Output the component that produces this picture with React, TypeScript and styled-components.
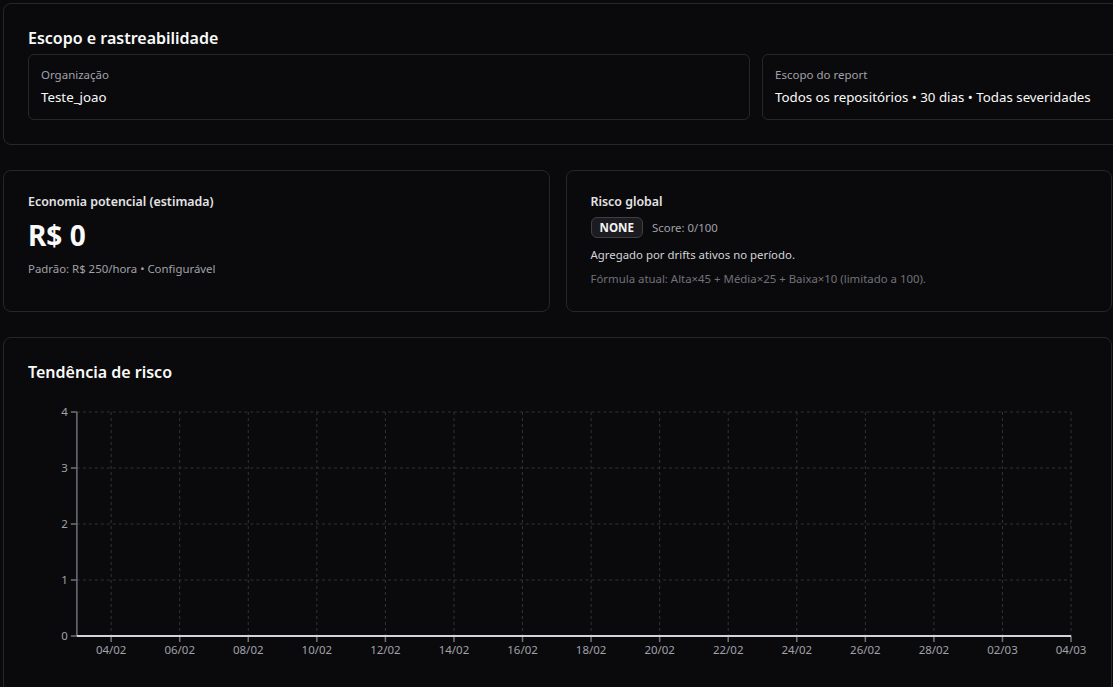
import React from "react";
import styled, { createGlobalStyle } from "styled-components";

const GlobalStyle = createGlobalStyle`
  html, body {
    margin: 0;
    padding: 0;
    background: #0a0a0c;
    overflow: hidden;
  }
  body {
    font-family: "Segoe UI", "Noto Sans", "Open Sans", sans-serif;
    color: #fafafa;
  }
  * { box-sizing: border-box; }
`;

const Page = styled.div`
  padding: 3px 1px 0 3px;
  display: flex;
  flex-direction: column;
  gap: 25px;
`;

const Card = styled.section<{ $wide?: boolean }>`
  border: 1px solid #27272a;
  border-radius: 8px;
  background: #0a0a0c;
  padding: 24px;
  width: ${(p) => (p.$wide ? "1145px" : "auto")};
`;

const CardTitle = styled.h2`
  margin: 0;
  font-size: 16px;
  line-height: 20px;
  font-weight: 600;
  color: #fafafa;
`;

const ScopeGrid = styled.div`
  margin-top: 6px;
  display: grid;
  grid-template-columns: 2fr 1fr;
  gap: 12px;
`;

const ScopeBox = styled.div`
  border: 1px solid #27272a;
  border-radius: 6px;
  padding: 12px;
`;

const ScopeLabel = styled.div`
  font-size: 11.5px;
  line-height: 16px;
  color: #a1a1aa;
`;

const ScopeValue = styled.div`
  margin-top: 4px;
  font-size: 13.3px;
  line-height: 20px;
  color: #fafafa;
  white-space: nowrap;
`;

const Row = styled.div`
  display: grid;
  grid-template-columns: 1fr 1fr;
  gap: 16px;
`;

const SmallTitle = styled.h3`
  margin: 0;
  font-size: 12.4px;
  line-height: 14px;
  font-weight: 600;
  color: #e4e4e7;
`;

const BigValue = styled.div`
  margin-top: 8px;
  font-size: 28px;
  line-height: 36px;
  font-weight: 700;
  color: #fafafa;
`;

const Muted = styled.p<{ $tone?: "soft" | "dim"; $gap?: number }>`
  margin: ${(p) => p.$gap ?? 8}px 0 0;
  font-size: 11.4px;
  line-height: 16px;
  color: ${(p) => (p.$tone === "soft" ? "#d4d4d8" : p.$tone === "dim" ? "#71717a" : "#a1a1aa")};
`;

const BadgeRow = styled.div`
  margin-top: 8px;
  display: flex;
  align-items: center;
  gap: 9px;
`;

const Badge = styled.span`
  display: inline-flex;
  align-items: center;
  height: 21px;
  padding: 0 8px;
  border: 1px solid #3f3f46;
  border-radius: 6px;
  background: #1c1c20;
  font-size: 11.6px;
  font-weight: 700;
  color: #f4f4f5;
`;

const ScoreText = styled.span`
  font-size: 11.4px;
  color: #a1a1aa;
`;

const ChartWrap = styled.div`
  margin-top: 14px;
`;

const days = 29;
const x0 = 49;
const x1 = 1046;
const yTop = 16;
const yBot = 240;
const fmt = (d: number) => {
  const date = new Date(2026, 1, 3 + d);
  const dd = String(date.getDate()).padStart(2, "0");
  const mm = String(date.getMonth() + 1).padStart(2, "0");
  return `${dd}/${mm}`;
};

function RiskChart() {
  const dx = (x1 - x0) / days;
  const xTicks = Array.from({ length: 15 }, (_, i) => 1 + i * 2);
  const yTicks = [0, 1, 2, 3, 4];
  const yOf = (v: number) => yBot - (v / 4) * (yBot - yTop);
  return (
    <svg width="100%" height="272" viewBox="0 0 1062 272" preserveAspectRatio="none">
      <g stroke="#333338" strokeDasharray="3 3" strokeWidth="1">
        {yTicks.slice(1).map((v) => (
          <line key={v} x1={x0} x2={x1} y1={yOf(v)} y2={yOf(v)} />
        ))}
        {xTicks.map((d) => (
          <line key={d} x1={x0 + d * dx} x2={x0 + d * dx} y1={yTop} y2={yBot} />
        ))}
      </g>
      <g stroke="#71717a" strokeWidth="1.5">
        <line x1={x0} x2={x0} y1={yTop} y2={yBot} />
        {yTicks.map((v) => (
          <line key={v} x1={x0 - 6} x2={x0} y1={yOf(v)} y2={yOf(v)} />
        ))}
        {xTicks.map((d) => (
          <line key={d} x1={x0 + d * dx} x2={x0 + d * dx} y1={yBot} y2={yBot + 6} />
        ))}
      </g>
      <line x1={x0} x2={x1} y1={yBot} y2={yBot} stroke="#d4d4d8" strokeWidth="2" />
      <g fill="#a1a1aa" fontSize="11.5" fontFamily="'Segoe UI', 'Noto Sans', sans-serif">
        {yTicks.map((v) => (
          <text key={v} x={x0 - 9} y={yOf(v) + 4} textAnchor="end">
            {v}
          </text>
        ))}
        {xTicks.map((d) => (
          <text key={d} x={x0 + d * dx} y={yBot + 18} textAnchor="middle">
            {fmt(d)}
          </text>
        ))}
      </g>
    </svg>
  );
}

export default function App() {
  return (
    <>
      <GlobalStyle />
      <Page>
        <Card $wide>
          <CardTitle>Escopo e rastreabilidade</CardTitle>
          <ScopeGrid>
            <ScopeBox>
              <ScopeLabel>Organização</ScopeLabel>
              <ScopeValue>Teste_joao</ScopeValue>
            </ScopeBox>
            <ScopeBox>
              <ScopeLabel>Escopo do report</ScopeLabel>
              <ScopeValue>Todos os repositórios • 30 dias • Todas severidades</ScopeValue>
            </ScopeBox>
          </ScopeGrid>
        </Card>

        <Row>
          <Card>
            <SmallTitle>Economia potencial (estimada)</SmallTitle>
            <BigValue>R$ 0</BigValue>
            <Muted>Padrão: R$ 250/hora • Configurável</Muted>
          </Card>
          <Card>
            <SmallTitle>Risco global</SmallTitle>
            <BadgeRow>
              <Badge>NONE</Badge>
              <ScoreText>Score: 0/100</ScoreText>
            </BadgeRow>
            <Muted $tone="soft" $gap={9}>Agregado por drifts ativos no período.</Muted>
            <Muted $tone="dim">
              Fórmula atual: Alta×45 + Média×25 + Baixa×10 (limitado a 100).
            </Muted>
          </Card>
        </Row>

        <Card>
          <CardTitle>Tendência de risco</CardTitle>
          <ChartWrap>
            <RiskChart />
          </ChartWrap>
        </Card>
      </Page>
    </>
  );
}
